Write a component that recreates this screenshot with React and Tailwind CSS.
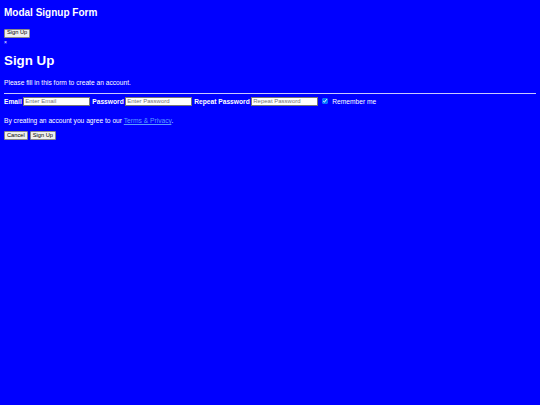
import React from "react";

const font = { fontFamily: '"Liberation Sans", Arial, sans-serif' };

function SmallButton({ children }) {
  return (
    <button
      type="button"
      className="h-[9px] px-[2px] border border-[#8a8a8a] bg-[#efefef] rounded-[1px] text-[5.7px] leading-none text-black align-top"
    >
      {children}
    </button>
  );
}

export default function App() {
  return (
    <div className="min-h-[405px] bg-[#0000ff] text-white px-[4px] pt-[7px] text-[6.67px] leading-[7.67px]" style={font}>
      <h2 className="text-[10px] font-bold leading-[11.5px] mb-[10px]">Modal Signup Form</h2>
      <div className="h-[9px] leading-[9px]">
        <SmallButton>Sign Up</SmallButton>
      </div>
      <div className="text-[5px] leading-[7px] mt-[1px]">×</div>

      <form>
        <h1 className="text-[13.33px] font-bold leading-[15.3px] mt-[7px] mb-[11px]">Sign Up</h1>
        <p>Please fill in this form to create an account.</p>
        <hr className="mt-[7px] mb-[2px] border-0 border-t border-[#c8c8ff]" />

        <div className="flex items-center flex-wrap h-[10px]">
          <label className="font-bold mr-[1.5px]">Email</label>
          <input
            type="text"
            placeholder="Enter Email"
            className="w-[67px] h-[9px] bg-white border border-[#767676] px-[1px] text-[6px] leading-none text-black placeholder:text-[#757575] mr-[2px] outline-none"
          />
          <label className="font-bold mr-[1.5px]">Password</label>
          <input
            type="password"
            placeholder="Enter Password"
            className="w-[67px] h-[9px] bg-white border border-[#767676] px-[1px] text-[6px] leading-none text-black placeholder:text-[#757575] mr-[2px] outline-none"
          />
          <label className="font-bold mr-[1.5px]">Repeat Password</label>
          <input
            type="password"
            placeholder="Repeat Password"
            className="w-[67px] h-[9px] bg-white border border-[#767676] px-[1px] text-[6px] leading-none text-black placeholder:text-[#757575] mr-[2px] outline-none"
          />
          <label className="flex items-center gap-[2px]">
            <input type="checkbox" defaultChecked className="w-[6px] h-[6px] m-[2px] accent-[#0075ff]" />
            Remember me
          </label>
        </div>

        <p className="mt-[11px]">
          By creating an account you agree to our{" "}
          <a href="#" className="text-[#5a9bff] underline">Terms &amp; Privacy</a>.
        </p>

        <div className="flex gap-[2px] mt-[6px]">
          <SmallButton>Cancel</SmallButton>
          <SmallButton>Sign Up</SmallButton>
        </div>
      </form>
    </div>
  );
}
